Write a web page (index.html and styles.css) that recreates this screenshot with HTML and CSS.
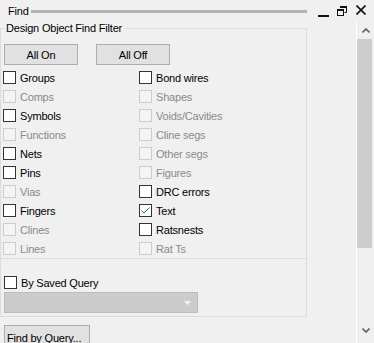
FILE: index.html
```html
<!DOCTYPE html>
<html lang="en">

<head>
    <meta charset="UTF-8">
    <meta name="viewport" content="width=device-width, initial-scale=1.0">
    <title>Find</title>
    <link rel="stylesheet" href="styles.css">
</head>

<body>
    <div class="window">
        <div class="titlebar">
            <span class="title">Find</span>
            <span class="grip"></span>
            <span class="tb-btn tb-min">
                <svg width="11" height="11" viewBox="0 0 11 11"><rect x="0" y="8" width="11" height="2" fill="#111"/></svg>
            </span>
            <span class="tb-btn tb-restore">
                <svg width="10" height="10" viewBox="0 0 10 10">
                    <path d="M3.5 0.5h6v6h-2" fill="none" stroke="#111" stroke-width="1"/>
                    <rect x="3" y="0" width="7" height="2" fill="#111"/>
                    <rect x="0.5" y="3.5" width="6" height="6" fill="none" stroke="#111" stroke-width="1"/>
                    <rect x="0" y="3" width="7" height="2" fill="#111"/>
                </svg>
            </span>
            <span class="tb-btn tb-close">
                <svg width="10" height="10" viewBox="0 0 10 10"><path d="M0.5 0.5L9.5 9.5M9.5 0.5L0.5 9.5" stroke="#111" stroke-width="1.6"/></svg>
            </span>
        </div>

        <div class="body">
            <div class="content">
                <fieldset class="filter">
                    <legend>Design Object Find Filter</legend>
                    <div class="btn-row">
                        <button class="btn">All On</button>
                        <button class="btn">All Off</button>
                    </div>
                    <div class="checks">
                        <label class="chk"><span class="box"></span>Groups</label>
                        <label class="chk"><span class="box"></span>Bond wires</label>
                        <label class="chk off"><span class="box"></span>Comps</label>
                        <label class="chk off"><span class="box"></span>Shapes</label>
                        <label class="chk"><span class="box"></span>Symbols</label>
                        <label class="chk off"><span class="box"></span>Voids/Cavities</label>
                        <label class="chk off"><span class="box"></span>Functions</label>
                        <label class="chk off"><span class="box"></span>Cline segs</label>
                        <label class="chk"><span class="box"></span>Nets</label>
                        <label class="chk off"><span class="box"></span>Other segs</label>
                        <label class="chk"><span class="box"></span>Pins</label>
                        <label class="chk off"><span class="box"></span>Figures</label>
                        <label class="chk off"><span class="box"></span>Vias</label>
                        <label class="chk"><span class="box"></span>DRC errors</label>
                        <label class="chk"><span class="box"></span>Fingers</label>
                        <label class="chk"><span class="box">
                            <svg width="11" height="11" viewBox="0 0 11 11"><path d="M1.5 5.5L4 8L9.5 2.5" fill="none" stroke="#555" stroke-width="1"/></svg>
                        </span>Text</label>
                        <label class="chk off"><span class="box"></span>Clines</label>
                        <label class="chk"><span class="box"></span>Ratsnests</label>
                        <label class="chk off"><span class="box"></span>Lines</label>
                        <label class="chk off"><span class="box"></span>Rat Ts</label>
                    </div>
                    <div class="saved">
                        <label class="chk"><span class="box"></span>By Saved Query</label>
                        <div class="combo">
                            <svg width="7" height="4" viewBox="0 0 7 4"><path d="M0 0h7L3.5 4z" fill="#f4f4f4"/></svg>
                        </div>
                    </div>
                </fieldset>
                <button class="btn btn-query">Find by Query...</button>
            </div>

            <div class="scrollbar">
                <div class="sb-arrow">
                    <svg width="8" height="5" viewBox="0 0 8 5"><path d="M0.5 4.5L4 1L7.5 4.5" fill="none" stroke="#606060" stroke-width="1.6"/></svg>
                </div>
                <div class="sb-thumb"></div>
                <div class="sb-track"></div>
                <div class="sb-arrow">
                    <svg width="8" height="5" viewBox="0 0 8 5"><path d="M0.5 0.5L4 4L7.5 0.5" fill="none" stroke="#606060" stroke-width="1.6"/></svg>
                </div>
            </div>
        </div>
    </div>
</body>

</html>
```

FILE: styles.css
```css
body {
    margin: 0;
    padding: 0;
    background-color: #f0f0f0;
    font-family: "Liberation Sans", Arial, sans-serif;
    font-size: 11px;
    letter-spacing: -0.2px;
    color: #000;
}

.window {
    width: 374px;
    height: 343px;
    overflow: hidden;
}

.titlebar {
    height: 22px;
    display: flex;
    align-items: center;
}

.title {
    padding-left: 8px;
    font-size: 11px;
    width: 23px;
}

.grip {
    width: 276px;
    height: 3px;
    background-color: #b4b4b4;
    margin-top: 1px;
}

.tb-btn {
    display: flex;
    align-items: center;
}

.tb-min {
    margin-left: 11px;
    margin-top: 2px;
}

.tb-restore {
    margin-left: 8px;
    margin-top: -1px;
}

.tb-close {
    margin-left: 9px;
    margin-top: -2px;
}

.body {
    display: flex;
    height: 321px;
}

.content {
    width: 356px;
}

.filter {
    width: 307px;
    margin: 0;
    padding: 0 0 3px 0;
    border: 1px solid #dcdcdc;
    box-sizing: border-box;
}

.filter legend {
    padding: 0 2px;
    margin-left: 3px;
    line-height: 13px;
}

.btn-row {
    display: flex;
    gap: 18px;
    padding: 9px 0 0 3px;
}

.btn {
    font-family: inherit;
    font-size: 11px;
    letter-spacing: -0.2px;
    width: 74px;
    height: 21px;
    padding: 0;
    background-color: #e1e1e1;
    border: 1px solid #adadad;
    color: #000;
}

.checks {
    display: grid;
    grid-template-columns: 136px 1fr;
    grid-auto-rows: 19px;
    margin-top: 3px;
    padding-left: 2px;
    border-bottom: 1px solid #dcdcdc;
}

.chk {
    display: flex;
    align-items: center;
    gap: 4px;
}

.box {
    width: 11px;
    height: 11px;
    border: 1px solid #333;
    background-color: #fff;
    display: flex;
}

.chk.off {
    color: #8a8a8a;
}

.chk.off .box {
    border-color: #cccccc;
    background-color: #f4f4f4;
}

.saved {
    padding: 17px 0 0 3px;
}

.saved .chk {
    height: 13px;
}

.combo {
    margin-top: 3px;
    width: 186px;
    height: 19px;
    background-color: #cccccc;
    border: 1px solid #bcbcbc;
    display: flex;
    align-items: center;
    justify-content: flex-end;
    padding-right: 6px;
}

.btn-query {
    margin: 8px 0 0 4px;
    width: 86px;
    height: 25px;
    text-align: left;
    padding-left: 2px;
}

.scrollbar {
    width: 17px;
    border-left: 1px solid #fff;
    display: flex;
    flex-direction: column;
    padding-bottom: 4px;
}

.sb-arrow {
    height: 17px;
    display: flex;
    align-items: center;
    justify-content: center;
}

.sb-thumb {
    height: 209px;
    width: 15px;
    background-color: #cdcdcd;
}

.sb-track {
    flex: 1;
}
```
